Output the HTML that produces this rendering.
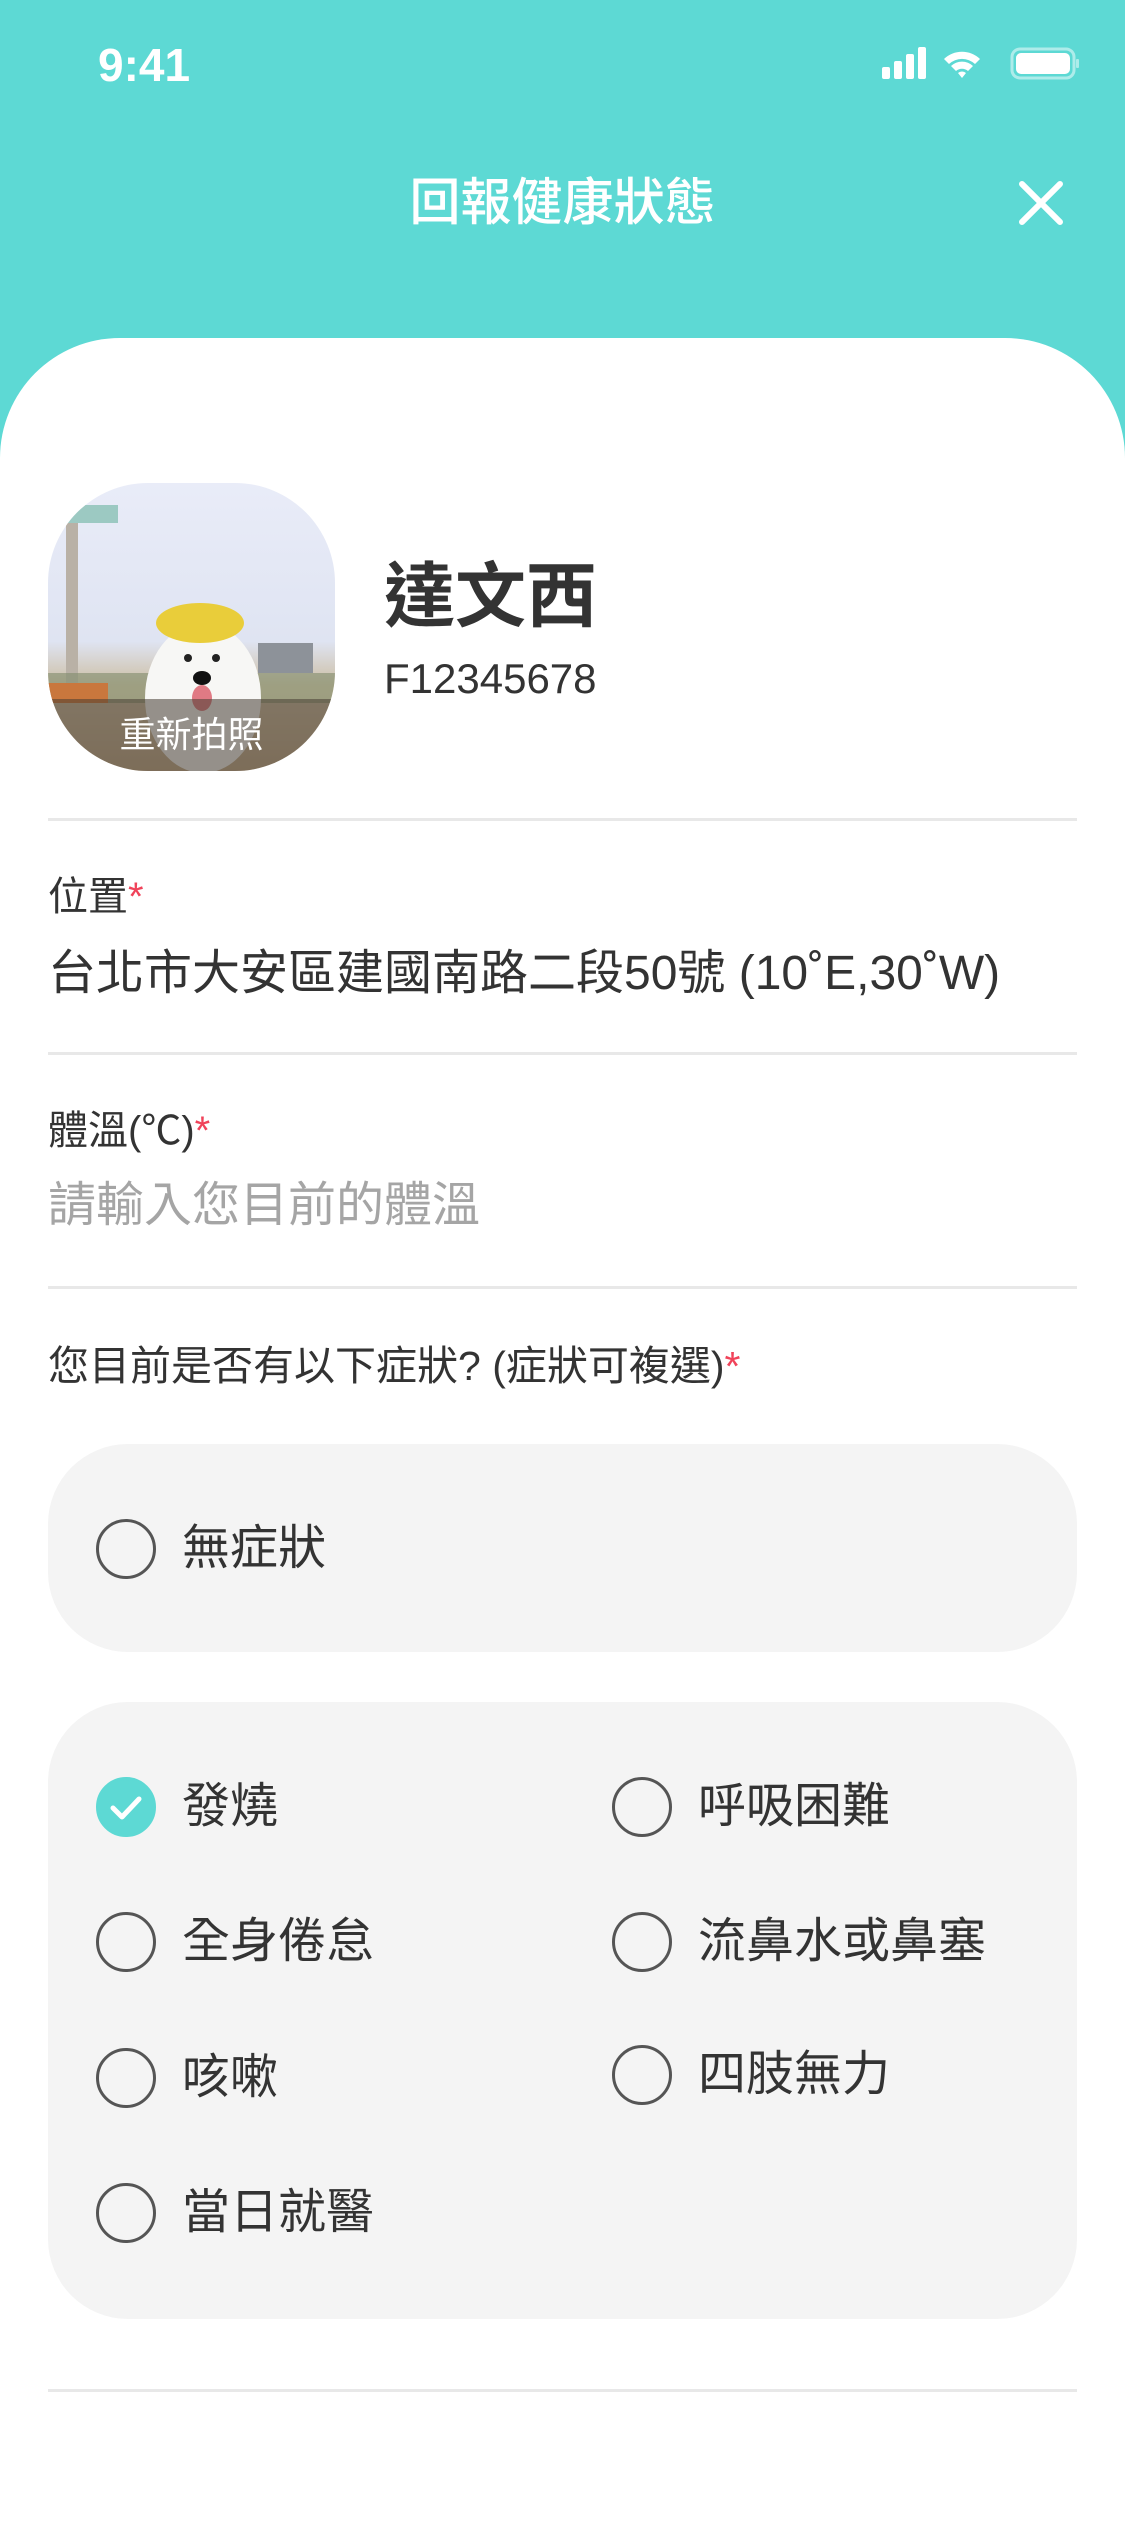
<!DOCTYPE html>
<html><head><meta charset="utf-8">
<style>
*{margin:0;padding:0;box-sizing:border-box}
body{width:1125px;height:2436px;overflow:hidden;background:#5dd9d4;font-family:"Liberation Sans","Noto Sans CJK TC",sans-serif;color:#333;position:relative}
.a{position:absolute;white-space:nowrap}
.card{position:absolute;left:0;top:338px;width:1125px;height:2200px;background:#fff;border-radius:120px 120px 0 0}
.div{position:absolute;left:48px;width:1029px;height:3px;background:#e8e8e8}
.box{position:absolute;left:48px;width:1029px;background:#f4f4f4;border-radius:80px}
.c{position:absolute;width:60px;height:60px;border:3px solid #555;border-radius:50%}
.t{position:absolute;font-size:48px;line-height:48px;color:#333}
.red{color:#f0435a}
</style></head><body>
<div class="a" style="left:98px;top:40px;font-size:46px;line-height:50px;color:#fff;font-weight:bold">9:41</div>
<svg class="a" style="left:880px;top:45px" width="200" height="40" viewBox="0 0 200 40">
<rect x="2" y="22" width="8" height="12" rx="2" fill="#fff"/>
<rect x="14" y="16" width="8" height="18" rx="2" fill="#fff"/>
<rect x="26" y="9" width="8" height="25" rx="2" fill="#fff"/>
<rect x="38" y="2" width="8" height="32" rx="2" fill="#fff"/>
<path d="M64 14 A26 26 0 0 1 100 14 L95 19 A19 19 0 0 0 69 19Z M71 21 A16 16 0 0 1 93 21 L88 26 A9 9 0 0 0 76 26Z M78 28 A6 6 0 0 1 86 28 L82 33Z" fill="#fff"/>
<rect x="132" y="4" width="62" height="29" rx="8" fill="none" stroke="#fff" stroke-opacity=".5" stroke-width="3"/>
<rect x="136" y="8" width="54" height="21" rx="5" fill="#fff"/>
<rect x="196" y="14" width="3" height="9" rx="1" fill="#fff" fill-opacity=".5"/>
</svg>
<div class="a" style="left:0;width:1125px;text-align:center;top:174px;font-size:51px;line-height:58px;color:#fff;font-weight:500">回報健康狀態</div>
<svg class="a" style="left:1018px;top:180px" width="46" height="46" viewBox="0 0 46 46"><path d="M4 4L42 42M42 4L4 42" stroke="#fff" stroke-width="6" stroke-linecap="round"/></svg>
<div class="card"></div>
<div class="a" style="left:48px;top:483px;width:287px;height:288px;border-radius:100px;overflow:hidden;background:linear-gradient(#e9ecf8,#dfe4f2 55%,#cdbfa5 70%,#c0a98a)">
<svg width="287" height="288" viewBox="0 0 287 288" style="position:absolute;left:0;top:0">
<rect x="0" y="22" width="70" height="18" fill="#9cc9c2"/>
<rect x="18" y="40" width="12" height="170" fill="#b9b1a6"/>
<rect x="0" y="190" width="287" height="30" fill="#7f8a6a" opacity=".6"/>
<rect x="210" y="160" width="55" height="30" fill="#8d9299"/>
<rect x="0" y="200" width="60" height="20" fill="#c9773d"/>
<ellipse cx="155" cy="215" rx="58" ry="75" fill="#f7f7f5"/>
<ellipse cx="152" cy="140" rx="44" ry="20" fill="#e9cd3a"/>
<circle cx="140" cy="175" r="4" fill="#222"/><circle cx="168" cy="175" r="4" fill="#222"/>
<ellipse cx="154" cy="195" rx="9" ry="7" fill="#111"/>
<ellipse cx="154" cy="215" rx="10" ry="13" fill="#e07a84"/>
</svg>
<div style="position:absolute;left:0;top:216px;width:287px;height:72px;background:rgba(70,60,50,.55);color:#fff;font-size:36px;line-height:72px;text-align:center">重新拍照</div>
</div>
<div class="a" style="left:384px;top:561px;font-size:71px;line-height:74px;font-weight:bold;color:#333">達文西</div>
<div class="a" style="left:384px;top:656px;font-size:42px;line-height:46px;color:#333">F12345678</div>
<div class="div" style="top:818px"></div>
<div class="a" style="left:48px;top:875px;font-size:40px;line-height:44px">位置<span class="red">*</span></div>
<div class="a" style="left:48px;top:948px;font-size:48px;line-height:52px">台北市大安區建國南路二段50號 (10˚E,30˚W)</div>
<div class="div" style="top:1052px"></div>
<div class="a" style="left:48px;top:1109px;font-size:40px;line-height:44px">體溫(℃)<span class="red">*</span></div>
<div class="a" style="left:48px;top:1180px;font-size:48px;line-height:52px;color:#a5a5a5">請輸入您目前的體溫</div>
<div class="div" style="top:1286px"></div>
<div class="a" style="left:48px;top:1344px;font-size:41px;line-height:44px">您目前是否有以下症狀? (症狀可複選)<span class="red">*</span></div>
<div class="box" style="top:1444px;height:208px"></div>
<div class="c" style="left:96px;top:1519px"></div><div class="t" style="left:182px;top:1525px">無症狀</div>
<div class="box" style="top:1702px;height:617px"></div>
<div class="c" style="left:96px;top:1777px;background:#5dd9d4;border-color:#5dd9d4"></div>
<svg class="a" style="left:96px;top:1777px" width="60" height="60" viewBox="0 0 60 60"><path d="M17 31L26 40L43 22" fill="none" stroke="#fff" stroke-width="5" stroke-linecap="round" stroke-linejoin="round"/></svg>
<div class="t" style="left:182px;top:1783px">發燒</div>
<div class="c" style="left:612px;top:1777px"></div><div class="t" style="left:698px;top:1783px">呼吸困難</div>
<div class="c" style="left:96px;top:1912px"></div><div class="t" style="left:182px;top:1918px">全身倦怠</div>
<div class="c" style="left:612px;top:1912px"></div><div class="t" style="left:698px;top:1918px">流鼻水或鼻塞</div>
<div class="c" style="left:96px;top:2048px"></div><div class="t" style="left:182px;top:2054px">咳嗽</div>
<div class="c" style="left:612px;top:2045px"></div><div class="t" style="left:698px;top:2051px">四肢無力</div>
<div class="c" style="left:96px;top:2183px"></div><div class="t" style="left:182px;top:2189px">當日就醫</div>
<div class="div" style="top:2389px"></div>
</body></html>
